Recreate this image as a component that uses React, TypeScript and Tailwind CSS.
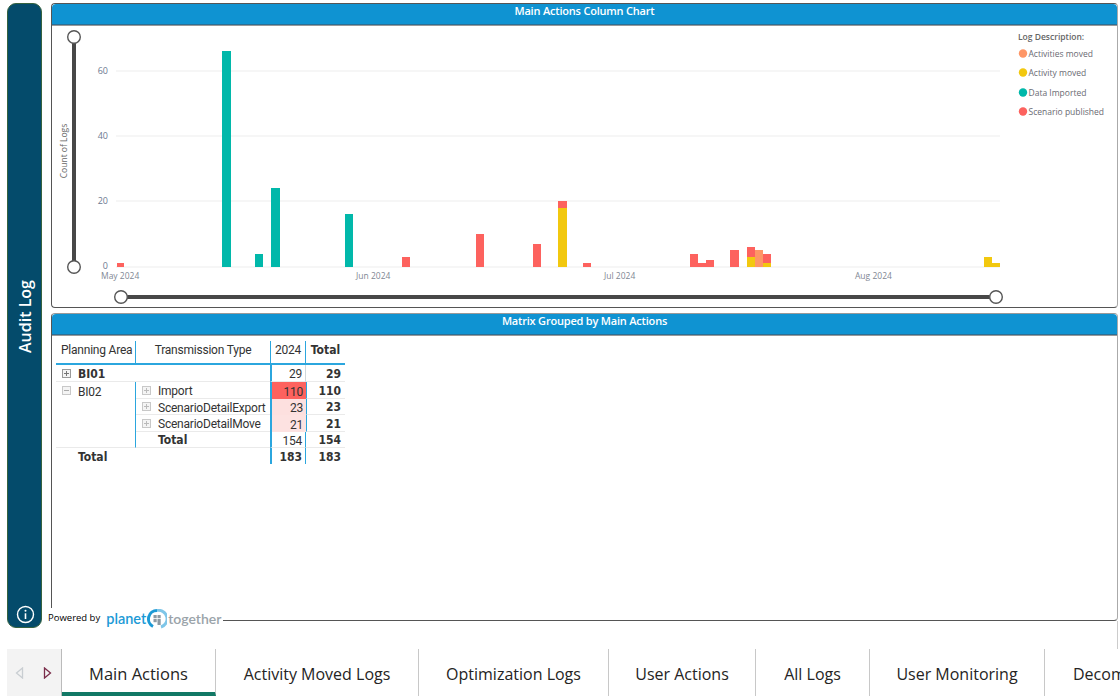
import React from "react";

const TEAL = "#01b8aa", YEL = "#f2c80f", RED = "#fd625e", ORG = "#fe9666";
const bars: [number, number, number, string][] = [
  [117, 124, 263, RED], [222, 231, 51, TEAL], [255, 263, 254, TEAL], [271, 280, 188, TEAL], [345, 353, 214, TEAL],
  [402, 410, 257, RED], [476, 484, 234, RED], [533, 541, 244, RED], [558, 567, 201, RED], [558, 567, 208, YEL],
  [583, 591, 263, RED], [690, 698, 254, RED], [698, 706, 263, RED], [706, 714, 260, RED], [730, 739, 250, RED],
  [747, 755, 247, RED], [747, 755, 257, YEL], [755, 763, 250, ORG], [763, 771, 254, RED], [763, 771, 263, YEL],
  [984, 992, 257, YEL], [992, 1000, 263, YEL],
];
const legend: [string, string, number][] = [
  ["Activities moved", ORG, 53.5], ["Activity moved", YEL, 72.5], ["Data Imported", TEAL, 92.5], ["Scenario published", RED, 111.5],
];

function Chart() {
  return (
    <svg viewBox="52 25 1065 283" width="1065" height="283" className="block" style={{ fontFamily: "'Open Sans','Liberation Sans',sans-serif" }}>
      {[71, 136, 201, 267].map((y) => (
        <line key={y} x1="116" x2="1000" y1={y} y2={y} stroke="#f3f3f3" strokeWidth="1.5" />
      ))}
      {([["60", 71], ["40", 136], ["20", 201], ["0", 266]] as [string, number][]).map(([t, y]) => (
        <text key={t} x="108" y={y + 3} textAnchor="end" fontSize="9" fill="#6b7a90">{t}</text>
      ))}
      <text transform="translate(67 151) rotate(-90)" textAnchor="middle" fontSize="8.5" fill="#666">Count of Logs</text>
      {bars.map(([a, b, t, c], i) => (
        <rect key={i} x={a} y={t} width={b - a} height={267 - t} fill={c} />
      ))}
      {([["May 2024", 101], ["Jun 2024", 356], ["Jul 2024", 604], ["Aug 2024", 855]] as [string, number][]).map(([t, x]) => (
        <text key={t} x={x} y="279" fontSize="8.5" fill="#7f8794">{t}</text>
      ))}
      <line x1="74" x2="74" y1="37" y2="267" stroke="#484848" strokeWidth="4" />
      <line x1="121" x2="996" y1="297" y2="297" stroke="#484848" strokeWidth="4" />
      {([[74, 37], [74, 267], [121, 297], [996, 297]] as [number, number][]).map(([x, y], i) => (
        <circle key={i} cx={x} cy={y} r="6.3" fill="#fff" stroke="#555" strokeWidth="1.4" />
      ))}
      <text x="1018" y="40" fontSize="8.5" fontWeight="600" fill="#666">Log Description:</text>
      {legend.map(([t, c, y]) => (
        <g key={t}>
          <circle cx="1023" cy={y} r="4.2" fill={c} />
          <text x="1028.5" y={y + 3} fontSize="8.5" fill="#6a6a72">{t}</text>
        </g>
      ))}
    </svg>
  );
}

function Header({ title }: { title: string }) {
  return (
    <div className="h-[21px] bg-[#0f93d2] border-b border-b-[#2a6f96] rounded-t-[4px] flex items-center justify-center text-white text-[11px] font-semibold shrink-0 pb-[5px] shadow-[0_1px_0_#999]" style={{ fontFamily: "'Open Sans',sans-serif", letterSpacing: "-0.2px" }}>
      {title}
    </div>
  );
}

function Box({ kind }: { kind: "plus" | "minus" | "dot" }) {
  return (
    <svg width="9" height="9" viewBox="0 0 9 9" className="shrink-0">
      <rect x="0.5" y="0.5" width="8" height="8" fill="#f4f4f4" stroke={kind === "plus" ? "#9a9a9a" : "#c8c8c8"} />
      <line x1="2" x2="7" y1="4.5" y2="4.5" stroke={kind === "minus" ? "#aaa" : kind === "plus" ? "#777" : "#bbb"} />
      {kind !== "minus" && <line x1="4.5" x2="4.5" y1="2" y2="7" stroke={kind === "plus" ? "#777" : "#bbb"} />}
    </svg>
  );
}

const num = "flex items-center justify-end pt-[2px]";
const line = "border-b border-b-[#eaeaea]";
const bold = "font-bold font-['DejaVu_Sans_Condensed','DejaVu_Sans',sans-serif] text-[12px] tracking-normal pt-[1px]";

function Matrix() {
  return (
    <div className="ml-[4px] mt-[6px] w-[289px] text-[12px] tracking-[-0.22px] text-[#333] font-['Roboto',sans-serif] grid grid-cols-[80px_134px_36px_39px] grid-rows-[24px_17px_17px_16px_17px_16px_16px]">
      <div className="flex items-center pl-[5px] pb-[4px] whitespace-nowrap border-r border-r-[#2ba6de] border-b-2 border-b-[#2ba6de]">Planning Area</div>
      <div className="flex items-center justify-center pb-[4px] border-b-2 border-b-[#2ba6de]">Transmission Type</div>
      <div className="flex items-center justify-center pb-[4px] border-l border-l-[#2ba6de] border-r border-r-[#2ba6de] border-b-2 border-b-[#2ba6de]">2024</div>
      <div className="flex items-center justify-center pb-[4px] border-b-2 border-b-[#2ba6de] font-bold font-['DejaVu_Sans_Condensed','DejaVu_Sans',sans-serif] tracking-normal">Total</div>

      <div className={`col-span-2 flex items-center gap-[7px] pl-[6px] ${line} ${bold}`}><Box kind="plus" />BI01</div>
      <div className={`${num} pr-[3px] border-l-2 border-l-[#2ba6de] border-r border-r-[#cfd8dc] ${line}`}>29</div>
      <div className={`flex items-center justify-end pr-[4px] ${line} ${bold}`}>29</div>

      <div className={`row-span-4 flex items-start gap-[7px] pl-[6px] pt-[1px] border-r border-r-[#2ba6de] ${line}`}><span className="mt-[3px]"><Box kind="minus" /></span>BI02</div>
      {([["Import", "110", "bg-[#fd625e]"], ["ScenarioDetailExport", "23", "bg-[#fde0df]"], ["ScenarioDetailMove", "21", "bg-[#fde2e1]"]] as [string, string, string][]).map(([n, v, bg]) => (
        <React.Fragment key={n}>
          <div className={`flex items-center gap-[7px] pl-[6px] pt-[2px] ${line}`}><span className="-mt-[2px]"><Box kind="dot" /></span>{n}</div>
          <div className={`${num} pr-[3px] border-l-2 border-l-[#2ba6de] ${bg}`}>{v}</div>
          <div className={`flex items-center justify-end pr-[4px] border-l border-l-[#2ba6de] ${line} ${bold}`}>{v}</div>
        </React.Fragment>
      ))}
      <div className={`flex items-center pl-[22px] ${line} ${bold}`}>Total</div>
      <div className={`${num} pr-[3px] border-l-2 border-l-[#2ba6de] border-r border-r-[#2ba6de] ${line}`}>154</div>
      <div className={`flex items-center justify-end pr-[4px] ${line} ${bold}`}>154</div>

      <div className={`col-span-2 flex items-center pl-[22px] ${bold}`}>Total</div>
      <div className={`flex items-center justify-end pr-[3px] border-l-2 border-l-[#2ba6de] border-r border-r-[#2ba6de] ${bold}`}>183</div>
      <div className={`flex items-center justify-end pr-[4px] ${bold}`}>183</div>
    </div>
  );
}

function Logo() {
  return (
    <div className="absolute left-[-7px] bottom-[-9px] h-[21px] w-[178px] bg-white flex items-center pl-[3px] text-[9.5px] text-black font-['Open_Sans',sans-serif]">
      <span className="font-medium">Powered by</span>
      <span className="ml-[6px] text-[#1c9ad6] text-[14.5px] font-semibold font-['Lato',sans-serif]">planet</span>
      <svg width="20" height="20" viewBox="0 0 20 20" className="mx-[1px] shrink-0">
        <path d="M10 1.5A8.5 8.5 0 0 0 6 17.5" fill="none" stroke="#1c9ad6" strokeWidth="3" />
        <path d="M10 1.5A8.5 8.5 0 0 1 14 18" fill="none" stroke="#7fc6e8" strokeWidth="3" />
        <rect x="6.5" y="6" width="3.2" height="3.2" fill="#8d9aa3" />
        <rect x="10.5" y="6" width="3.2" height="3.2" fill="#8d9aa3" />
        <rect x="6.5" y="10" width="3.2" height="3.2" fill="#8d9aa3" />
        <rect x="10.5" y="10" width="3.2" height="6" fill="#8d9aa3" />
      </svg>
      <span className="text-[#9aa3a9] text-[14px] font-semibold font-['Lato',sans-serif]">together</span>
    </div>
  );
}

const tabs: [string, string][] = [
  ["Activity Moved Logs", "w-[203px]"], ["Optimization Logs", "w-[190px]"], ["User Actions", "w-[147px]"],
  ["All Logs", "w-[114px]"], ["User Monitoring", "w-[175px]"],
];

export default function App() {
  return (
    <div className="w-[1120px] h-[700px] bg-white overflow-hidden flex flex-col font-['Open_Sans',sans-serif]">
      <div className="flex pl-[7px] pt-[3px] h-[649px] shrink-0">
        <div className="relative w-[35px] h-[625px] shrink-0 bg-[#044b6b] border border-[#35623f] rounded-[9px] flex items-center justify-center">
          <span className="text-white text-[16px] font-semibold ml-[1px] mt-[1px] [writing-mode:vertical-rl] rotate-180">Audit Log</span>
          <svg width="19" height="19" viewBox="0 0 19 19" className="absolute left-[8px] bottom-[3px]">
            <circle cx="9.5" cy="9.5" r="8" fill="none" stroke="#fff" strokeWidth="1.4" />
            <circle cx="9.5" cy="5.8" r="1" fill="#fff" />
            <line x1="9.5" x2="9.5" y1="8.3" y2="14" stroke="#fff" strokeWidth="1.6" />
          </svg>
        </div>
        <div className="ml-[9px] w-[1067px] flex flex-col">
          <div className="h-[305px] shrink-0 border border-[#555] border-r-[#aaa] rounded-[4px] overflow-hidden">
            <Header title="Main Actions Column Chart" />
            <Chart />
          </div>
          <div className="relative mt-[5px] h-[308px] shrink-0 border border-[#555] border-t-[#999] border-r-[#aaa] rounded-[4px]">
            <Header title="Matrix Grouped by Main Actions" />
            <Matrix />
            <Logo />
          </div>
          <div className="grow border-r border-r-[#ccc]" />
        </div>
      </div>
      <div className="flex h-[47px] pl-[7px] shrink-0 text-[16px] text-[#252423]">
        <div className="w-[55px] bg-[#f3f3f3] border-r border-r-[#bbb] flex items-center justify-between pl-[8px] pr-[9px] shrink-0">
          <svg width="9" height="12" viewBox="0 0 9 12"><path d="M7.5 1 1.5 6l6 5z" fill="none" stroke="#c9ced2" strokeWidth="1.3" /></svg>
          <svg width="9" height="12" viewBox="0 0 9 12"><path d="M1.5 1l6 5-6 5z" fill="none" stroke="#7a2c4a" strokeWidth="1.3" /></svg>
        </div>
        <div className="w-[154px] shrink-0 border-r border-r-[#c8c8c8] border-b-4 border-b-[#117865] flex items-center justify-center text-[16.5px] font-medium pt-[7px]">Main Actions</div>
        {tabs.map(([t, w]) => (
          <div key={t} className={`${w} shrink-0 border-r border-r-[#c8c8c8] flex items-center justify-center pt-[2px]`}>{t}</div>
        ))}
        <div className="pl-[28px] pt-[2px] flex items-center whitespace-nowrap">Decomposition Tree</div>
      </div>
    </div>
  );
}
